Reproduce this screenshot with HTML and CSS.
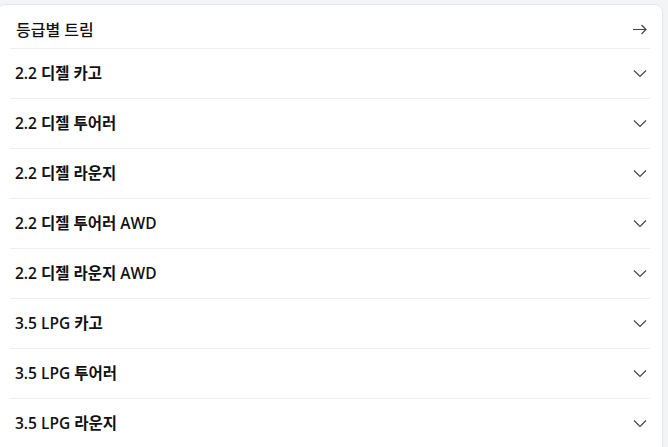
FILE: index.html
```html
<!DOCTYPE html>
<html lang="ko">
<head>
    <meta charset="UTF-8">
    <meta name="viewport" content="width=device-width, initial-scale=1.0">
    <title>등급별 트림</title>
    <link rel="stylesheet" href="styles.css">
</head>
<body>
    <div class="trim-card">
        <div class="trim-head">
            <h2>등급별 트림</h2>
            <svg class="icon" width="16" height="16" viewBox="0 0 16 16"><path d="M1 8.5h13M9.5 4l4.5 4.5-4.5 4.5" fill="none" stroke="#444" stroke-width="1.2"/></svg>
        </div>
        <ul class="trim-list">
            <li class="trim-item"><span>2.2 디젤 카고</span><svg class="icon" width="14" height="14" viewBox="0 0 14 14"><path d="M1 4.5l6 6 6-6" fill="none" stroke="#444" stroke-width="1.2"/></svg></li>
            <li class="trim-item"><span>2.2 디젤 투어러</span><svg class="icon" width="14" height="14" viewBox="0 0 14 14"><path d="M1 4.5l6 6 6-6" fill="none" stroke="#444" stroke-width="1.2"/></svg></li>
            <li class="trim-item"><span>2.2 디젤 라운지</span><svg class="icon" width="14" height="14" viewBox="0 0 14 14"><path d="M1 4.5l6 6 6-6" fill="none" stroke="#444" stroke-width="1.2"/></svg></li>
            <li class="trim-item"><span>2.2 디젤 투어러 AWD</span><svg class="icon" width="14" height="14" viewBox="0 0 14 14"><path d="M1 4.5l6 6 6-6" fill="none" stroke="#444" stroke-width="1.2"/></svg></li>
            <li class="trim-item"><span>2.2 디젤 라운지 AWD</span><svg class="icon" width="14" height="14" viewBox="0 0 14 14"><path d="M1 4.5l6 6 6-6" fill="none" stroke="#444" stroke-width="1.2"/></svg></li>
            <li class="trim-item"><span>3.5 LPG 카고</span><svg class="icon" width="14" height="14" viewBox="0 0 14 14"><path d="M1 4.5l6 6 6-6" fill="none" stroke="#444" stroke-width="1.2"/></svg></li>
            <li class="trim-item"><span>3.5 LPG 투어러</span><svg class="icon" width="14" height="14" viewBox="0 0 14 14"><path d="M1 4.5l6 6 6-6" fill="none" stroke="#444" stroke-width="1.2"/></svg></li>
            <li class="trim-item"><span>3.5 LPG 라운지</span><svg class="icon" width="14" height="14" viewBox="0 0 14 14"><path d="M1 4.5l6 6 6-6" fill="none" stroke="#444" stroke-width="1.2"/></svg></li>
        </ul>
    </div>
</body>
</html>
```

FILE: styles.css
```css
body {
    margin: 0;
    background: #f3f4f6;
    font-family: "Open Sans", "Noto Sans CJK KR", sans-serif;
    color: #111;
    overflow: hidden;
}

.trim-card {
    margin: 4px 0 0 -3px;
    width: 666px;
    background: #fff;
    border: 1px solid #e6e7ea;
    border-radius: 8px;
    padding: 0 12px 0 12px;
    box-sizing: border-box;
    height: 460px;
}

.trim-head {
    display: flex;
    align-items: center;
    justify-content: space-between;
    height: 44px;
    padding: 4px 2px 0 6px;
    box-sizing: border-box;
    border-bottom: 1px solid #eeeff1;
}

.trim-head h2 {
    margin: 0;
    font-size: 16px;
    font-weight: 500;
}

.trim-list {
    list-style: none;
    margin: 0;
    padding: 0;
}

.trim-item {
    display: flex;
    align-items: center;
    justify-content: space-between;
    height: 49px;
    padding: 0 3px 2px 5px;
    box-sizing: content-box;
    height: 47px;
    border-bottom: 1px solid #eeeff1;
    font-size: 15.5px;
    font-weight: 600;
}

.icon {
    display: block;
}
```
